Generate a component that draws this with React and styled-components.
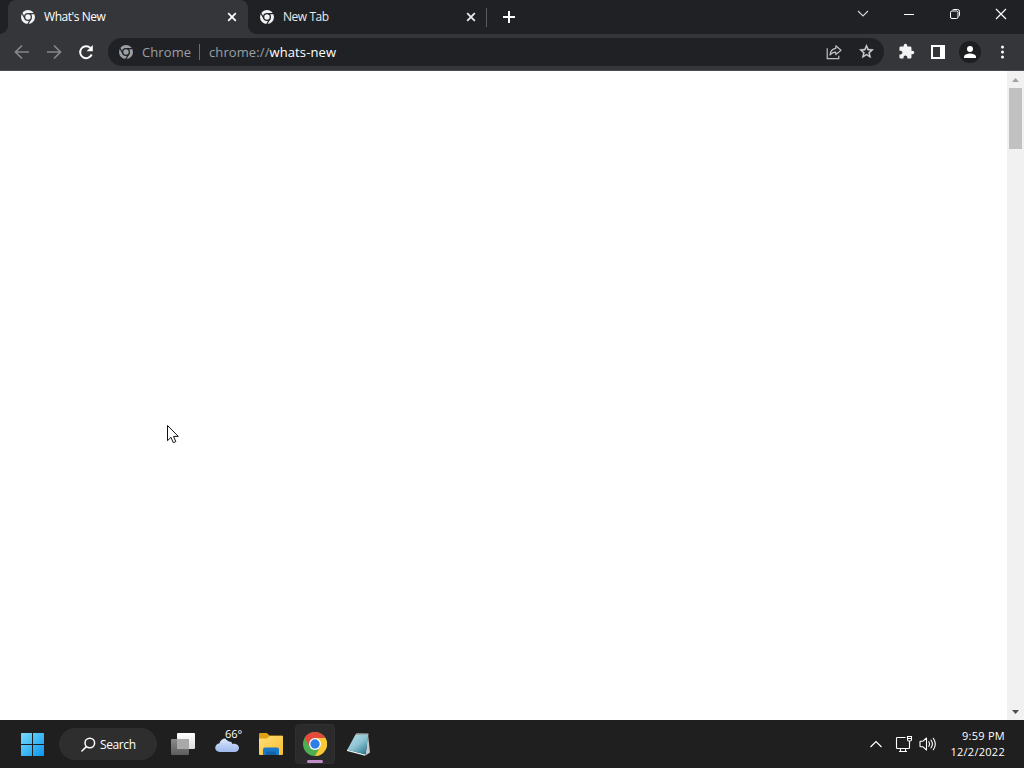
import React from 'react'
import styled, { createGlobalStyle } from 'styled-components'

const GlobalStyle = createGlobalStyle`
    * {
        box-sizing: border-box;
    }
    body {
        margin: 0;
        overflow: hidden;
        font-family: "Open Sans", "Noto Sans", sans-serif;
    }
    svg {
        display: block;
        flex: none;
    }
`
const Desktop = styled.div`
    position: relative;
    display: flex;
    flex-direction: column;
    width: 1024px;
    height: 768px;
    background: #fff;
`
const TabStrip = styled.div`
    display: flex;
    height: 34px;
    padding-left: 8px;
    background: #202124;
`
const Tab = styled.div`
    position: relative;
    display: flex;
    align-items: center;
    width: ${({ $width }) => $width}px;
    height: 34px;
    padding: 0 9px 0 ${({ $active }) => ($active ? 13 : 12)}px;
    border-radius: 8px 8px 0 0;
    color: ${({ $active }) => ($active ? '#fff' : '#e8eaed')};
    background: ${({ $active }) => ($active ? '#35363a' : 'transparent')};
    &::before,
    &::after {
        content: '';
        display: ${({ $active }) => ($active ? 'block' : 'none')};
        position: absolute;
        bottom: 0;
        width: 8px;
        height: 8px;
    }
    &::before {
        left: -8px;
        background: radial-gradient(circle at 0 0, transparent 7.5px, #35363a 8px);
    }
    &::after {
        right: -8px;
        background: radial-gradient(circle at 100% 0, transparent 7.5px, #35363a 8px);
    }
`
const TabTitle = styled.div`
    flex: 1;
    margin-left: 9px;
    font-size: 12px;
    font-weight: 500;
    line-height: 16px;
    letter-spacing: -0.45px;
    white-space: nowrap;
`
const TabDivider = styled.div`
    width: 1px;
    height: 19px;
    margin: 8px 15px 0 -1px;
    background: #5a5b60;
`
const NewTab = styled.div`
    display: flex;
    align-items: center;
    height: 34px;
`
const WindowControls = styled.div`
    display: flex;
    margin-left: auto;
`
const WindowButton = styled.div`
    display: flex;
    justify-content: center;
    align-items: center;
    width: 46px;
    height: 28px;
`
const Toolbar = styled.div`
    display: flex;
    align-items: center;
    height: 37px;
    padding: 0 6px 1px;
    background: #35363a;
    border-bottom: 1px solid #4b4c50;
`
const Slot = styled.div`
    display: flex;
    justify-content: center;
    align-items: center;
    width: 32px;
    height: 28px;
`
const Omnibox = styled.div`
    display: flex;
    align-items: center;
    width: 776px;
    height: 28px;
    margin: 0 6px;
    padding: 0 2px 0 11px;
    border-radius: 14px;
    background: #202124;
`
const Chip = styled.div`
    width: 58px;
    margin-left: 9px;
    border-right: 1px solid #6b6d72;
    font-size: 13px;
    line-height: 16px;
    letter-spacing: 0.1px;
    color: #9aa0a6;
`
const Url = styled.div`
    flex: 1;
    margin-left: 9px;
    font-size: 13px;
    line-height: 16px;
    letter-spacing: 0.1px;
    color: #9aa0a6;
    span {
        color: #fff;
    }
`
const Avatar = styled.div`
    display: flex;
    justify-content: center;
    align-items: center;
    width: 22px;
    height: 22px;
    border-radius: 50%;
    background: #1d1e21;
`
const Page = styled.div`
    display: flex;
    justify-content: flex-end;
    height: 649px;
    background: #fff;
`
const ScrollBar = styled.div`
    display: flex;
    flex-direction: column;
    align-items: center;
    width: 17px;
    background: #f1f1f1;
`
const ScrollArrow = styled.div`
    display: flex;
    justify-content: center;
    align-items: center;
    width: 17px;
    height: 17px;
`
const Thumb = styled.div`
    width: 13px;
    height: 61px;
    margin-bottom: auto;
    background: #c1c1c1;
`
const Taskbar = styled.div`
    display: flex;
    align-items: center;
    height: 48px;
    padding: 0 19px 0 10px;
    background: #1f1f1f;
`
const TaskSlot = styled.div`
    display: flex;
    justify-content: center;
    align-items: center;
    width: 44px;
    height: 48px;
`
const ActiveApp = styled.div`
    display: flex;
    flex-direction: column;
    align-items: center;
    width: 40px;
    height: 40px;
    padding-top: 7px;
    border: 1px solid #303030;
    border-radius: 4px;
    background: #2b2b2b;
`
const Running = styled.div`
    width: 16px;
    height: 3px;
    margin-top: 4px;
    border-radius: 2px;
    background: #c08fc8;
`
const Search = styled.div`
    display: flex;
    align-items: center;
    width: 98px;
    height: 32px;
    margin: 0 4px 0 5px;
    padding-left: 22px;
    border-radius: 16px;
    background: #2e2e2e;
    color: #fff;
    font-size: 12px;
    font-weight: 500;
    letter-spacing: -0.4px;
    span {
        margin: 1px 0 0 4px;
    }
`
const Weather = styled.div`
    position: relative;
    width: 24px;
    height: 32px;
`
const Cloud = styled.svg`
    margin-top: 9px;
`
const Degrees = styled.div`
    position: absolute;
    top: -2px;
    left: 9px;
    padding: 0 1px;
    border-radius: 8px;
    background: #1f1f1f;
    color: #fff;
    font-size: 11px;
    font-weight: 500;
    line-height: 16px;
    letter-spacing: -0.1px;
`
const Tray = styled.div`
    display: flex;
    align-items: center;
    margin-left: auto;
`
const TrayIcon = styled.svg`
    margin-right: ${({ $gap }) => $gap}px;
`
const Clock = styled.div`
    width: 60px;
    color: #fff;
    font-size: 11px;
    line-height: 16px;
    letter-spacing: 0.28px;
    text-align: right;
    white-space: nowrap;
`
const Pointer = styled.svg`
    position: absolute;
    left: 166px;
    top: 424px;
`

const ChromeMono = ({ color, hole }) => (
    <svg width="14" height="14" viewBox="0 0 14 14">
        <circle cx="7" cy="7" r="7" fill={color} />
        <circle cx="7" cy="7" r="4" fill={hole} />
        <g stroke={hole} strokeWidth="1.2">
            <path d="M7 3.6h6.600M4.060 8.700L.760 2.980M9.940 8.700L6.640 14.420" />
        </g>
        <circle cx="7" cy="7" r="2.700" fill={color} />
    </svg>
)

const Close = ({ color }) => (
    <svg width="14" height="14" viewBox="0 0 14 14" fill="none" stroke={color} strokeWidth="1.8">
        <path d="M3.2 3.2l7.6 7.6M10.8 3.2l-7.6 7.6" />
    </svg>
)

const ChromeColor = () => (
    <svg width="24" height="24" viewBox="0 0 24 24">
        <circle cx="12" cy="12" r="12" fill="#4caf50" />
        <path d="M1.6 6A12 12 0 0 1 22.4 6H12L6.8 15z" fill="#e64a3c" />
        <path d="M22.4 6A12 12 0 0 1 12 24l5.2-9V6z" fill="#fcc934" />
        <path d="M12 6h10.4l-4 7z" fill="#fcc934" />
        <circle cx="12" cy="12" r="6" fill="#fff" />
        <circle cx="12" cy="12" r="4.7" fill="#2f7de9" />
    </svg>
)

const App = () => {
    return (
        <Desktop>
            <GlobalStyle />
            <TabStrip>
                <Tab $active $width={240}>
                    <ChromeMono color="#f1f3f4" hole="#35363a" />
                    <TabTitle>What's New</TabTitle>
                    <Close color="#fff" />
                </Tab>
                <Tab $width={239}>
                    <ChromeMono color="#f1f3f4" hole="#202124" />
                    <TabTitle>New Tab</TabTitle>
                    <Close color="#e8eaed" />
                </Tab>
                <TabDivider />
                <NewTab>
                    <svg width="14" height="14" viewBox="0 0 14 14" stroke="#fff" strokeWidth="2">
                        <path d="M1 7h12M7 1v12" />
                    </svg>
                </NewTab>
                <WindowControls>
                    <WindowButton>
                        <svg width="12" height="8" viewBox="0 0 12 8" fill="none" stroke="#d5d7da" strokeWidth="1.1">
                            <path d="M1 1l5 5 5-5" />
                        </svg>
                    </WindowButton>
                    <WindowButton>
                        <svg width="10" height="1" viewBox="0 0 10 1"><path d="M0 0h10v1H0z" fill="#fff" /></svg>
                    </WindowButton>
                    <WindowButton>
                        <svg width="10" height="10" viewBox="0 0 10 10" fill="none" stroke="#fff">
                            <rect x=".5" y="2" width="7.500" height="7.500" rx="1.5" />
                            <path d="M2.5 .9C3 .6 3.5.5 4 .5h3.500a2 2 0 0 1 2 2V6c0 .6-.2 1.1-.7 1.5" />
                        </svg>
                    </WindowButton>
                    <WindowButton>
                        <svg width="12" height="12" viewBox="0 0 12 12" stroke="#fff" strokeWidth="1.2">
                            <path d="M1 1l10 10M11 1L1 11" />
                        </svg>
                    </WindowButton>
                </WindowControls>
            </TabStrip>

            <Toolbar>
                <Slot>
                    <svg width="16" height="16" viewBox="0 0 16 16" fill="none" stroke="#85878b" strokeWidth="1.7">
                        <path d="M15 8H2M8 1.5L1.5 8 8 14.5" />
                    </svg>
                </Slot>
                <Slot>
                    <svg width="16" height="16" viewBox="0 0 16 16" fill="none" stroke="#85878b" strokeWidth="1.7">
                        <path d="M1 8h13M8 1.5L14.5 8 8 14.5" />
                    </svg>
                </Slot>
                <Slot>
                    <svg width="16" height="16" viewBox="0 0 16 16" fill="none">
                        <path d="M13.7 10.500A6 6 0 1 1 12.400 3.900" stroke="#fff" strokeWidth="2" />
                        <path d="M14.8 1v6.2H8.6z" fill="#fff" />
                    </svg>
                </Slot>
                <Omnibox>
                    <ChromeMono color="#9aa0a6" hole="#202124" />
                    <Chip>Chrome</Chip>
                    <Url>chrome://<span>whats-new</span></Url>
                    <Slot>
                        <svg width="16" height="16" viewBox="0 0 16 16" fill="none" stroke="#bdc1c6" strokeWidth="1.2">
                            <path d="M1.2 4.200v10.500h11.600v-3" />
                            <path d="M9.8 1.8l5.2 4.4-5.2 4.4V8.2C7 8.2 5.4 9 4 11c.2-3.6 2.2-6 5.8-6.6z" strokeLinejoin="round" />
                        </svg>
                    </Slot>
                    <Slot>
                        <svg width="17" height="17" viewBox="0 0 24 24" fill="#d0d3d7">
                            <path d="M22 9.240l-7.190-.620L12 2 9.190 8.630 2 9.240l5.460 4.730L5.820 21 12 17.270 18.180 21l-1.630-7.030zM12 15.400l-3.760 2.270 1-4.280-3.320-2.880 4.380-.380L12 6.100l1.710 4.040 4.380.380-3.320 2.880 1 4.280z" stroke="#d0d3d7" strokeWidth=".5" />
                        </svg>
                    </Slot>
                </Omnibox>
                <Slot>
                    <svg width="17" height="17" viewBox="0 0 24 24" fill="#f1f3f4">
                        <path d="M20.5 11H19V7c0-1.1-.9-2-2-2h-4V3.500a2.5 2.500 0 0 0-5 0V5H4c-1.1 0-1.990.9-1.990 2v3.800H3.500c1.490 0 2.700 1.210 2.700 2.700s-1.210 2.700-2.700 2.700H2V20c0 1.100.9 2 2 2h3.800v-1.500c0-1.490 1.210-2.700 2.700-2.700s2.700 1.210 2.700 2.700V22H17c1.100 0 2-.9 2-2v-4h1.500a2.500 2.500 0 0 0 0-5z" />
                    </svg>
                </Slot>
                <Slot>
                    <svg width="14" height="14" viewBox="0 0 14 14">
                        <path fillRule="evenodd" d="M0 0h14v14H0zM2 2v10h7V2z" fill="#fff" />
                    </svg>
                </Slot>
                <Slot>
                    <Avatar>
                        <svg width="12" height="12" viewBox="0 0 12 12" fill="#fff">
                            <circle cx="6" cy="3" r="3" />
                            <path d="M0 12v-1.500C0 8.500 4 7.400 6 7.400s6 1.100 6 3.100V12z" />
                        </svg>
                    </Avatar>
                </Slot>
                <Slot>
                    <svg width="4" height="14" viewBox="0 0 4 14" fill="#fff">
                        <circle cx="2.500" cy="2" r="1.500" />
                        <circle cx="2.500" cy="7" r="1.500" />
                        <circle cx="2.500" cy="12" r="1.500" />
                    </svg>
                </Slot>
            </Toolbar>

            <Page>
                <ScrollBar>
                    <ScrollArrow>
                        <svg width="7" height="4" viewBox="0 0 7 4"><path d="M0 4L3.500 0 7 4z" fill="#a3a3a3" /></svg>
                    </ScrollArrow>
                    <Thumb />
                    <ScrollArrow>
                        <svg width="7" height="4" viewBox="0 0 7 4"><path d="M0 0l3.500 4L7 0z" fill="#505050" /></svg>
                    </ScrollArrow>
                </ScrollBar>
            </Page>

            <Taskbar>
                <TaskSlot>
                    <svg width="24" height="24" viewBox="0 0 24 24">
                        <defs>
                            <linearGradient id="win" gradientUnits="userSpaceOnUse" x1="0" y1="0" x2="24" y2="24">
                                <stop offset="0" stopColor="#7be0fb" />
                                <stop offset="1" stopColor="#0a95ee" />
                            </linearGradient>
                        </defs>
                        <path d="M1.500 1H12v11H1V1.500zM13 1h10.500l.5.5V12H13zM1 13h11v11H1.500l-.5-.5zM13 13h11v10.500l-.5.5H13z" fill="url(#win)" />
                    </svg>
                </TaskSlot>
                <Search>
                    <svg width="15" height="15" viewBox="0 0 15 15" fill="none" stroke="#fff" strokeWidth="1.500">
                        <circle cx="8.800" cy="6" r="4.800" />
                        <path d="M5.400 9.600L.9 14" strokeLinecap="round" />
                    </svg>
                    <span>Search</span>
                </Search>
                <TaskSlot>
                    <svg width="24" height="22" viewBox="0 0 24 22">
                        <defs>
                            <linearGradient id="front" x1="0" y1="0" x2="0" y2="1">
                                <stop offset="0" stopColor="#fff" />
                                <stop offset="1" stopColor="#dcdcdc" />
                            </linearGradient>
                            <linearGradient id="back" x1="0" y1="0" x2="0" y2="1">
                                <stop offset="0" stopColor="#8a8a8a" />
                                <stop offset="1" stopColor="#5e5e5e" />
                            </linearGradient>
                        </defs>
                        <rect x="6" width="18" height="16" rx="1" fill="url(#front)" />
                        <rect y="6" width="18" height="16" rx="1" fill="url(#back)" />
                        <path d="M6 6h12v10H6z" fill="#a9a9a9" />
                    </svg>
                </TaskSlot>
                <TaskSlot>
                    <Weather>
                        <Cloud width="24" height="16" viewBox="0 0 24 16">
                            <defs>
                                <linearGradient id="cloud" x1="0" y1="0" x2="0" y2="1">
                                    <stop offset="0" stopColor="#dce8fb" />
                                    <stop offset="1" stopColor="#9db8ec" />
                                </linearGradient>
                            </defs>
                            <path d="M4.500 15a4.200 4.200 0 0 1-.2-8.400C5 3.500 7.400 1.500 10.500 1.500c3.600 0 6 2.300 6.600 5.400 3.700-.6 6.900 1 6.900 4.100 0 2.300-1.800 4-4.300 4z" fill="url(#cloud)" />
                        </Cloud>
                        <Degrees>66°</Degrees>
                    </Weather>
                </TaskSlot>
                <TaskSlot>
                    <svg width="24" height="22" viewBox="0 0 24 22">
                        <defs>
                            <linearGradient id="folder" x1="0" y1="0" x2="1" y2="1">
                                <stop offset="0" stopColor="#ffe07a" />
                                <stop offset="1" stopColor="#f8bd2c" />
                            </linearGradient>
                        </defs>
                        <path d="M0 1.200Q0 0 1.200 0h6.600l2.700 2.400h12.300Q24 2.400 24 3.600V12H0z" fill="#dea017" />
                        <path d="M0 5.500h8l2.700-2.600H23q1 0 1 1V21q0 1-1 1H1q-1 0-1-1z" fill="url(#folder)" />
                        <path d="M4 22v-5.500q0-2 2-2h12q2 0 2 2V22z" fill="#1978c8" />
                        <path d="M7 22v-2.500q0-1 1-1h8q1 0 1 1V22z" fill="#1462a8" />
                    </svg>
                </TaskSlot>
                <TaskSlot>
                    <ActiveApp>
                        <ChromeColor />
                        <Running />
                    </ActiveApp>
                </TaskSlot>
                <TaskSlot>
                    <svg width="24" height="24" viewBox="0 0 24 24">
                        <defs>
                            <linearGradient id="note" x1="0" y1="0" x2=".8" y2="1">
                                <stop offset="0" stopColor="#b9e3ea" />
                                <stop offset=".55" stopColor="#8cc3d2" />
                                <stop offset="1" stopColor="#2b7b94" />
                            </linearGradient>
                        </defs>
                        <path d="M21 2l2 18.500-4.500 3z" fill="#c3c8ca" />
                        <path d="M0 17.500v1.500l18 4.700 1-1.200z" fill="#e9eeee" />
                        <path d="M8.500 2.500L21.300 2.300 18.700 22.500 .3 17.800z" fill="url(#note)" />
                        <path d="M8.500 2.700l1-1.500L21.500 1.500l-.2 1.300z" fill="#a9b8bb" />
                    </svg>
                </TaskSlot>

                <Tray>
                    <TrayIcon $gap={12} width="14" height="8" viewBox="0 0 14 8" fill="none" stroke="#fff" strokeWidth="1.200">
                        <path d="M1.500 7L7 1.500 12.500 7" />
                    </TrayIcon>
                    <TrayIcon $gap={6} width="18" height="18" viewBox="0 0 18 18" fill="none" stroke="#fff" strokeWidth="1.100">
                        <path d="M10.500 2.500H2.300q-.8 0-.8.8v9.400q0 .8.800.8H13.700q.8 0 .8-.8V8M5.500 13.500v3M10.500 13.500v3M4 16.500h8" />
                        <path d="M12.500 1.500h4v3.300q0 1.200-1.200 1.200h-1.600q-1.200 0-1.200-1.200zM12.500 3.500h4M14.500 6v3" />
                    </TrayIcon>
                    <TrayIcon $gap={8} width="18" height="16" viewBox="0 0 18 16" fill="none" stroke="#fff" strokeWidth="1.100" strokeLinejoin="round">
                        <path d="M1 5.700q0-.5.5-.5H4L7.500 2v12L4 10.800H1.500q-.5 0-.5-.5z" />
                        <path d="M9.800 5.700q1.500 2.300 0 4.600M12 4q2.800 4 0 8M14.300 2.300q4 5.700 0 11.400" strokeLinecap="round" />
                    </TrayIcon>
                    <Clock>
                        9:59 PM
                        <br />
                        12/2/2022
                    </Clock>
                </Tray>
            </Taskbar>

            <Pointer width="14" height="22" viewBox="0 0 14 22">
                <path d="M1.500 1.500v15.200l3.500-3.400 2.300 5.400 2.500-1.100-2.300-5.200h4.800z" fill="#fff" stroke="#111" />
            </Pointer>
        </Desktop>
    )
}

export default App
